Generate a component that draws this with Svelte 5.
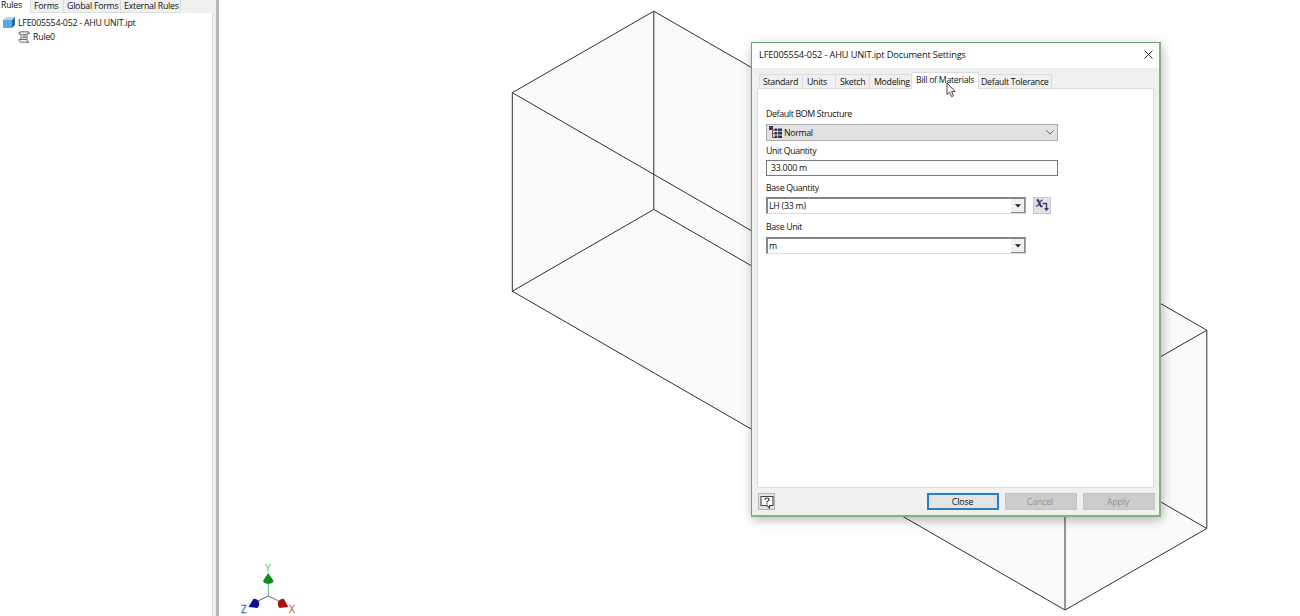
<script>
  const browserTabs = [
    { label: 'Rules', w: 31, active: true },
    { label: 'Forms', w: 33 },
    { label: 'Global Forms', w: 57 },
    { label: 'External Rules', w: 60 }
  ];
  const tabs = [
    { label: 'Standard', w: 44 },
    { label: 'Units', w: 33 },
    { label: 'Sketch', w: 34 },
    { label: 'Modeling', w: 42 },
    { label: 'Bill of Materials', w: 67, active: true },
    { label: 'Default Tolerance', w: 73, wide: true }
  ];
</script>

<div class="app">
  <aside class="browser">
    <nav class="btabs">
      {#each browserTabs as t}
        <span class="btab" class:active={t.active} style="width:{t.w}px">{t.label}</span>
      {/each}
    </nav>
    <div class="tree">
      <div class="node">
        <svg width="12" height="12" viewBox="0 0 12 12"><path d="M0 3 3 0H12L9 3Z" fill="#a6daf4"/><path d="M0 3H9V10.5Q9 11 8 11H1Q0 11 0 10Z" fill="#56addb"/><path d="M9 3 12 0V8L9 11Z" fill="#246c9d"/></svg>
        <span>LFE005554-052 - AHU UNIT.ipt</span>
      </div>
      <div class="node child">
        <svg width="12" height="12" viewBox="0 0 12 12" fill="#eee" stroke="#666"><path d="M3 .8H10Q11.5.8 11.3 2.6H9V8.5H3V3H1Q.5 1 3 .8Z"/><path d="M1 8.5H9Q9 11.3 11 11.2H2.8Q.7 11 1 8.5ZM4.5 3.5H8M4.5 5H8M4.5 6.6H8" stroke-width=".9"/></svg>
        <span>Rule0</span>
      </div>
    </div>
  </aside>

  <main class="view">
    <svg width="1081" height="616" viewBox="219 0 1081 616">
      <path d="M654 11.5 1207 330.5V528.5L1065 610 512 291.5V93Z" fill="#fafafa"/>
      <g fill="none" stroke="#303030" stroke-width="1">
        <path d="M653.8 11.2 1206.8 330.2V528.5L1065 610 512.3 291.2V92.7Z"/>
        <path d="M512.3 92.7 1065 411.7 1206.8 330.2M1065 411.7V610M653.8 11.2V209.4M512.3 291.2 653.8 209.4 1206.8 528.5"/>
      </g>
      <g fill="none" stroke-width="1">
        <path d="M268.3 584V596" stroke="#62b562"/>
        <path d="M268.3 596 258 601" stroke="#555588"/>
        <path d="M268.3 596 279 601" stroke="#966"/>
      </g>
      <path d="M268.3 573 273.4 580.5Q273.5 583.5 268.3 584 263 583.5 263.2 580.5Z" fill="#118c18"/>
      <path d="M248.5 607 253.5 598.8Q257 598.3 258.8 601.5 260 605.5 257.6 608Z" fill="#0c0c96"/>
      <path d="M288.3 607 283.8 598.8Q280.5 598.3 278.2 601.5 277 605.5 279.5 608Z" fill="#ad1010"/>
      <g class="axis">
        <text x="265" y="572" fill="#7fda7f">Y</text>
        <text x="241" y="613" fill="#3685b5">Z</text>
        <text x="289" y="613" fill="#d17c56">X</text>
      </g>
    </svg>
  </main>

  <section class="dialog">
    <header>
      <h1>LFE005554-052 - AHU UNIT.ipt Document Settings</h1>
      <svg width="9" height="9" viewBox="0 0 9 9" stroke="#333" stroke-width="1"><path d="M.5.5 8.5 8.5M8.5.5.5 8.5"/></svg>
    </header>
    <nav class="tabs">
      {#each tabs as t}
        <span class="tab" class:active={t.active} class:wide={t.wide} style="width:{t.w}px">{t.label}</span>
      {/each}
    </nav>
    <div class="pane">
      <div class="label">Default BOM Structure</div>
      <div class="select">
        <svg width="14" height="13" viewBox="0 0 14 13"><path d="M3.5 4V11.5H6M3.5 7.5H6" fill="none" stroke="#954747"/><path d="M0 0H4V4H0Z" fill="#38364a"/><path d="M1 1H2V2H1ZM3 3H5V5H3Z" fill="#c25a5a"/><path d="M5.5 2.5H8V5H5.5ZM5.5 6H8V8.5H5.5ZM5.5 9.5H8V12H5.5ZM8.7 2.5H13V5.2H8.7ZM8.7 6H13V8.6H8.7ZM8.7 9.4H13V12H8.7Z" fill="#303454"/></svg>
        <span>Normal</span>
        <svg class="chev" width="8" height="5" viewBox="0 0 8 5"><path d="M.5.5 4 4 7.5.5" fill="none" stroke="#666"/></svg>
      </div>
      <div class="label l2">Unit Quantity</div>
      <div class="input">33.000 m</div>
      <div class="label l3">Base Quantity</div>
      <div class="line">
        <div class="combo"><span>LH (33 m)</span><i><svg width="6" height="4" viewBox="0 0 6 4"><path d="M0 .3H6L3 3.6Z" fill="#222"/></svg></i></div>
        <button class="param" aria-label="Parameter">
          <svg width="14" height="15" viewBox="0 0 14 15" fill="none" stroke="#3a3b68"><path d="M1.5 2.3H3.2L5.8 8.2H7.5" stroke-width="1.9"/><path d="M8 2Q6 1.8 4.5 5T.8 8.3" stroke-width="1.1"/><path d="M7.5 5.5H11.5V11" stroke-width="1.4"/><path d="M9 10H14L11.5 13.3Z" fill="#3a3b68" stroke="none"/></svg>
        </button>
      </div>
      <div class="label l4">Base Unit</div>
      <div class="combo"><span>m</span><i><svg width="6" height="4" viewBox="0 0 6 4"><path d="M0 .3H6L3 3.6Z" fill="#222"/></svg></i></div>
    </div>
    <footer>
      <button class="help" aria-label="Help">
        <svg width="14" height="14" viewBox="0 0 14 14"><path d="M1 1.5H13V10.5H9.5V13L6.7 10.5H1Z" fill="#fff" stroke="#444" stroke-width="1.1"/><path d="M5 4.7Q5 3 7 3T9 4.7Q9 5.8 7 6.5V7.5M7 8.3V9.5" fill="none" stroke="#333" stroke-width="1.2"/></svg>
      </button>
      <button class="btn primary">Close</button>
      <button class="btn">Cancel</button>
      <button class="btn">Apply</button>
    </footer>
  </section>

  <svg class="cursor" width="10" height="16" viewBox="0 0 10 16"><path d="M1 1V12.5L3.6 10.2 5.6 14.7 7.5 13.8 5.6 9.5H9.2Z" fill="#fff" stroke="#333" stroke-width=".9"/></svg>
</div>

<style>
  :global(body) { margin: 0; background: #fff; }
  .app { position: relative; display: flex; width: 1300px; height: 616px; overflow: hidden; background: #fff; font: 8.8px/12px "Open Sans", "Noto Sans", sans-serif; letter-spacing: -0.35px; color: #111; }
  .app * { box-sizing: border-box; }
  span, h1, .label, .input, button { white-space: nowrap; }
  svg { display: block; flex: none; }
  .browser { width: 219px; height: 616px; background: #f0f0f0; border-right: 3px solid #b9b9b9; flex: none; }
  .btabs { display: flex; height: 13px; letter-spacing: -.25px; }
  .btab { padding-left: 3px; border-right: 1px solid #d9d9d9; border-bottom: 1px solid #ddd; line-height: 13px; }
  .btab.active { background: #fff; border-bottom-color: #fff; padding-left: 1px; line-height: 10px; }
  .tree { width: 213px; height: 603px; background: #fff; border-right: 1px solid #ddd; padding: 3px 0 0 3px; letter-spacing: -.22px; }
  .node { display: flex; align-items: center; gap: 3px; height: 14px; }
  .node.child { padding-left: 15px; }
  .view { flex: 1; overflow: hidden; }
  .axis { font: 10px "Open Sans", sans-serif; letter-spacing: 0; stroke-width: .3; }
  .axis text:nth-child(1) { stroke: #7fda7f; }
  .axis text:nth-child(2) { stroke: #3685b5; }
  .axis text:nth-child(3) { stroke: #d17c56; }
  .dialog { position: absolute; left: 751px; top: 42px; width: 410px; height: 475px; border: 1px solid #6da371; border-width: 1px 2px 2px 1px; border-right-color: #84b087; border-bottom-color: #84b087; background: #f0f0f0; box-shadow: 1px 3px 10px rgba(0,0,0,.28); display: flex; flex-direction: column; }
  header { height: 25px; background: #fff; display: flex; align-items: center; justify-content: space-between; padding: 0 6px 2px 7px; flex: none; }
  h1 { margin: 0; font-size: 9.2px; font-weight: 400; letter-spacing: -.13px; }
  .tabs { display: flex; align-items: flex-end; height: 20px; padding-left: 7px; flex: none; }
  .tab { height: 14px; padding-left: 4px; border: 1px solid #dcdcdc; border-left: 0; border-bottom: 0; line-height: 14px; letter-spacing: -.3px; }
  .tab.wide { padding-left: 2px; }
  .tab:first-child { border-left: 1px solid #dcdcdc; padding-left: 3px; }
  .tab.active { height: 17px; margin-bottom: -1px; background: #fff; line-height: 15px; z-index: 1; }
  .pane { margin-left: 5px; width: 397px; height: 400px; background: #fff; border: 1px solid #dcdcdc; padding: 19px 0 0 8px; flex: none; }
  .label { height: 16px; line-height: 12px; }
  .select { width: 292px; height: 17px; background: #e1e1e1; border: 1px solid #adadad; display: flex; align-items: center; gap: 1px; padding: 0 3px 0 2px; letter-spacing: -.35px; }
  .chev { margin-left: auto; }
  .l2 { margin-top: 4px; height: 15px; }
  .input { width: 292px; height: 16px; border: 1px solid #7a7a7a; padding-left: 4px; line-height: 14px; letter-spacing: -.25px; }
  .l3 { margin-top: 6px; height: 15px; }
  .line { display: flex; gap: 7px; }
  .combo { width: 260px; height: 17px; border: 1px solid #aaa; border-top: 2px solid #858585; border-left: 2px solid #858585; border-bottom-color: #ddd; display: flex; justify-content: space-between; align-items: center; letter-spacing: -.25px; }
  .combo span { padding-left: 1px; line-height: 14px; }
  .combo i { width: 14px; height: 14px; background: #f0f0f0; border-right: 1px solid #888; border-bottom: 1px solid #888; display: grid; place-items: center; }
  .l4 { margin-top: 7px; height: 16px; }
  button { font: inherit; letter-spacing: inherit; padding: 0; margin: 0; border-radius: 0; }
  .param { width: 18px; height: 17px; border: 1px solid #c5c5cb; background: #e2e2e8; display: grid; place-items: center; }
  footer { flex: 1; display: flex; align-items: flex-start; padding: 5px 4px 0 6px; letter-spacing: -.15px; }
  .help { width: 17px; height: 17px; border: 1px solid #b5b5b5; background: #e3e3e3; display: grid; place-items: center; margin-right: auto; }
  .btn { width: 72px; height: 17px; border: 1px solid #c4c4c4; background: #ccc; color: #929292; margin-left: 6px; padding: 1px 2px 0 0; line-height: 14px; }
  .btn.primary { border: 2px solid #2680c8; background: #e3e3e3; color: #111; line-height: 12px; padding: 1px 1px 0 0; }
  .cursor { position: absolute; left: 946px; top: 82px; z-index: 2; }
</style>
